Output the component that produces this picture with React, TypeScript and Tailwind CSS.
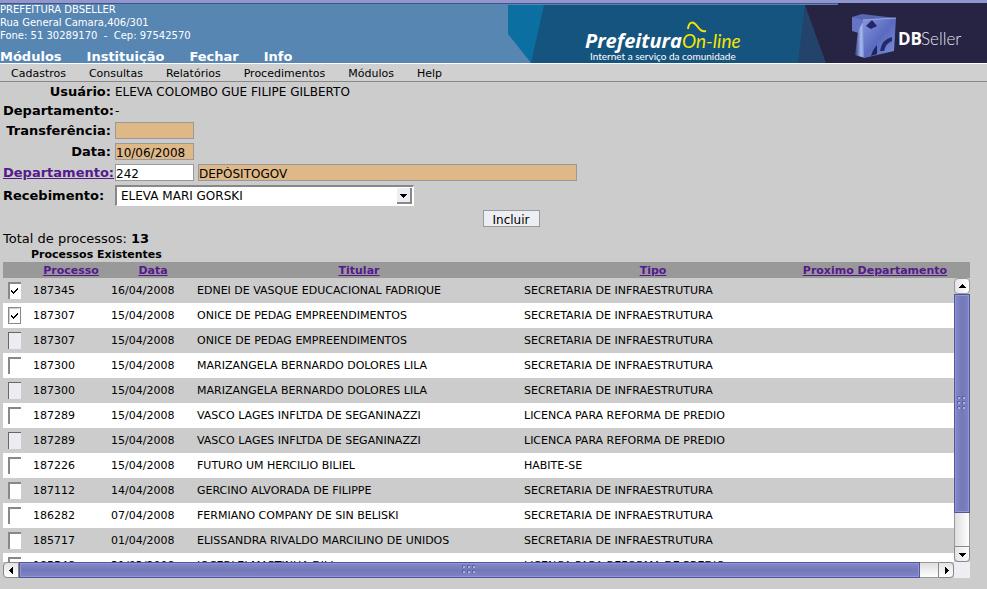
import React from "react";

type Processo = {
  numero: string;
  data: string;
  titular: string;
  tipo: string;
  estado: "marcado" | "focado" | "livre" | "bloqueado";
};

const processos: Processo[] = [
  { numero: "187345", data: "16/04/2008", titular: "EDNEI DE VASQUE EDUCACIONAL FADRIQUE", tipo: "SECRETARIA DE INFRAESTRUTURA", estado: "marcado" },
  { numero: "187307", data: "15/04/2008", titular: "ONICE DE PEDAG EMPREENDIMENTOS", tipo: "SECRETARIA DE INFRAESTRUTURA", estado: "focado" },
  { numero: "187307", data: "15/04/2008", titular: "ONICE DE PEDAG EMPREENDIMENTOS", tipo: "SECRETARIA DE INFRAESTRUTURA", estado: "bloqueado" },
  { numero: "187300", data: "15/04/2008", titular: "MARIZANGELA BERNARDO DOLORES LILA", tipo: "SECRETARIA DE INFRAESTRUTURA", estado: "livre" },
  { numero: "187300", data: "15/04/2008", titular: "MARIZANGELA BERNARDO DOLORES LILA", tipo: "SECRETARIA DE INFRAESTRUTURA", estado: "bloqueado" },
  { numero: "187289", data: "15/04/2008", titular: "VASCO LAGES INFLTDA DE SEGANINAZZI", tipo: "LICENCA PARA REFORMA DE PREDIO", estado: "livre" },
  { numero: "187289", data: "15/04/2008", titular: "VASCO LAGES INFLTDA DE SEGANINAZZI", tipo: "LICENCA PARA REFORMA DE PREDIO", estado: "bloqueado" },
  { numero: "187226", data: "15/04/2008", titular: "FUTURO UM HERCILIO BILIEL", tipo: "HABITE-SE", estado: "livre" },
  { numero: "187112", data: "14/04/2008", titular: "GERCINO ALVORADA DE FILIPPE", tipo: "SECRETARIA DE INFRAESTRUTURA", estado: "livre" },
  { numero: "186282", data: "07/04/2008", titular: "FERMIANO COMPANY DE SIN BELISKI", tipo: "SECRETARIA DE INFRAESTRUTURA", estado: "livre" },
  { numero: "185717", data: "01/04/2008", titular: "ELISSANDRA RIVALDO MARCILINO DE UNIDOS", tipo: "SECRETARIA DE INFRAESTRUTURA", estado: "livre" },
  { numero: "185548", data: "31/03/2008", titular: "JOCERLEI MARTINHA DILL", tipo: "LICENCA PARA REFORMA DE PREDIO", estado: "livre" },
];

const menuPrincipal = ["Módulos", "Instituição", "Fechar", "Info"];
const menuSecundario = ["Cadastros", "Consultas", "Relatórios", "Procedimentos", "Módulos", "Help"];

function Banner() {
  return (
    <svg viewBox="0 0 479 60" className="h-15 w-[479px] shrink-0 self-start" role="img" aria-label="Prefeitura On-line - DBSeller">
      <defs>
        <linearGradient id="lateral" x1="0" y1="0" x2="1" y2="0">
          <stop offset="0" stopColor="#2f3c86" />
          <stop offset="0.6" stopColor="#a9b9f0" />
          <stop offset="1" stopColor="#6f82cf" />
        </linearGradient>
        <linearGradient id="frente" x1="0" y1="0" x2="1" y2="1">
          <stop offset="0" stopColor="#8797dd" />
          <stop offset="0.5" stopColor="#5a6abf" />
          <stop offset="1" stopColor="#7d92e0" />
        </linearGradient>
      </defs>
      <path d="M0 2H479V60H23L0 31Z" fill="#0b70a1" />
      <path d="M36 2H479V60H23Z" fill="#15547e" />
      <path d="M297 2H330V60H290Z" fill="#23436b" />
      <path d="M297 2H330V0H479V60H318Z" fill="#262343" />
      <text x="77" y="45" fill="#fff" fontSize="20" fontWeight="700" fontStyle="italic" fontFamily="Open Sans, sans-serif">Prefeitura</text>
      <text x="174" y="45" fill="#f2e600" fontSize="19" fontStyle="italic" fontFamily="Lato, sans-serif">On-line</text>
      <text x="82" y="57" fill="#fff" fontSize="10" fontFamily="Lato, sans-serif">Internet a serviço da comunidade</text>
      <path d="M180 26C181 17 186 19 189 23S194 29 198 28" fill="none" stroke="#f2e600" strokeWidth="2" />
      <path d="M344 14L354 11L388 15L355 19Z" fill="#5a66b0" />
      <path d="M344 14L355 17L354 31L344 28Z" fill="#6674c4" />
      <path d="M350 28L356 17L357 55L347 52Z" fill="url(#lateral)" />
      <path d="M355 17L388 15L386 48L356 55Z" fill="url(#frente)" />
      <path d="M358 23L364 17L369 23L363 26Z" fill="#23266b" />
      <path d="M355 17L388 15" stroke="#9aa6e8" strokeWidth="1" />
      <path d="M384 34Q374 36 372 48L376 48Q378 40 384 38Z" fill="#262a6c" />
      <path d="M369 42Q365 46 363 53L369 51Z" fill="#20245c" />
      <text x="390" y="42" fill="#fff" fontSize="17" fontWeight="700" fontFamily="Open Sans, sans-serif">DB</text>
      <text x="413" y="42" fill="#e4e4f0" fontSize="17" fontWeight="300" fontFamily="Lato, sans-serif">Seller</text>
    </svg>
  );
}

function Seta({ direcao }: { direcao: "cima" | "baixo" | "esquerda" | "direita" }) {
  const formas = {
    cima: "M0 5H7V4H6V3H5V2H4V1H3V2H2V3H1V4H0Z",
    baixo: "M0 2H7V3H6V4H5V5H4V6H3V5H2V4H1V3H0Z",
    esquerda: "M5 0V7H4V6H3V5H2V4H1V3H2V2H3V1H4V0Z",
    direita: "M2 0V7H3V6H4V5H5V4H6V3H5V2H4V1H3V0Z",
  };
  return (
    <svg viewBox="0 0 7 7" className="size-[7px]" shapeRendering="crispEdges" aria-hidden="true">
      <path d={formas[direcao]} fill="#000" />
    </svg>
  );
}

function Ranhuras({ colunas, linhas }: { colunas: number; linhas: number }) {
  const pontos = Array.from({ length: colunas * linhas }, (_, i) => [(i % colunas) * 5, Math.floor(i / colunas) * 5]);
  return (
    <svg width={colunas * 5} height={linhas * 5} shapeRendering="crispEdges" aria-hidden="true">
      {pontos.map(([x, y]) => (
        <g key={`${x}-${y}`}>
          <path d={`M${x} ${y}h3v1h-2v2h-1z`} fill="#5d61a0" />
          <path d={`M${x + 1} ${y + 1}h2v2h-2z`} fill="#a9aeea" />
        </g>
      ))}
    </svg>
  );
}

function BarraVertical() {
  return (
    <div className="flex w-4 shrink-0 flex-col">
      <button aria-label="Rolar para cima" className="flex h-4 items-center justify-center rounded-sm border border-[#999] bg-linear-to-r from-[#e4e4e4] to-white">
        <Seta direcao="cima" />
      </button>
      <div className="flex flex-1 flex-col border-x border-[#999] bg-linear-to-r from-[#dedede] to-white">
        <div className="-mx-px flex h-[219px] items-center justify-center border border-[#54578c] bg-linear-to-r from-[#8388cc] via-[#7478b6] to-[#7f84c8] shadow-[inset_0_0_0_1px_#8f94e0]">
          <Ranhuras colunas={2} linhas={3} />
        </div>
      </div>
      <button aria-label="Rolar para baixo" className="flex h-4 items-center justify-center rounded-b-sm border border-[#888] bg-linear-to-r from-[#e4e4e4] to-white">
        <Seta direcao="baixo" />
      </button>
    </div>
  );
}

function BarraHorizontal() {
  return (
    <div className="flex h-4">
      <div className="flex flex-1">
        <button aria-label="Rolar para a esquerda" className="flex w-4 items-center justify-center rounded-l-sm border border-[#888] bg-linear-to-b from-[#e4e4e4] to-white">
          <Seta direcao="esquerda" />
        </button>
        <div className="flex flex-1 border-y border-[#999] bg-linear-to-b from-[#dedede] to-white">
          <div className="-my-px flex w-[98%] items-center justify-center border border-[#54578c] bg-linear-to-b from-[#8388cc] via-[#7478b6] to-[#7f84c8] shadow-[inset_0_0_0_1px_#8f94e0]">
            <Ranhuras colunas={3} linhas={2} />
          </div>
        </div>
        <button aria-label="Rolar para a direita" className="flex w-4 items-center justify-center rounded-r-sm border border-[#888] bg-linear-to-b from-[#e4e4e4] to-white">
          <Seta direcao="direita" />
        </button>
      </div>
      <div className="w-4 bg-[#edeef3]" />
    </div>
  );
}

const estiloCaixa = {
  marcado: "border-t-2 border-l-2 border-[#888] bg-white",
  focado: "border border-[#888] bg-white shadow-[inset_-1px_-1px_0_#fff,inset_1px_1px_0_#ccc]",
  livre: "border-t-2 border-l-2 border-[#888] bg-white",
  bloqueado: "border-t border-l border-[#666] bg-[#ebedf2]",
};

function Caixa({ processo }: { processo: Processo }) {
  return (
    <span className="grid h-[17px] w-[13px]">
      <input
        type="checkbox"
        aria-label={`Processo ${processo.numero}`}
        defaultChecked={processo.estado === "marcado" || processo.estado === "focado"}
        disabled={processo.estado === "bloqueado"}
        className={`peer col-start-1 row-start-1 h-[17px] w-[13px] appearance-none ${estiloCaixa[processo.estado]}`}
      />
      <svg viewBox="0 0 7 6" className="pointer-events-none invisible col-start-1 row-start-1 h-[6px] w-[7px] place-self-center peer-checked:visible" shapeRendering="crispEdges" aria-hidden="true">
        <path d="M0 2h1v1h1v1h1v-1h1v-1h1v-1h1v-1h1v2h-1v1h-1v1h-1v1h-1v1h-1v-1h-1v-1h-1z" fill="#000" />
      </svg>
    </span>
  );
}

const rotulo = "text-right text-[13px] font-bold whitespace-nowrap";
const campo = "h-[17px] border border-[#999] px-0 pt-0.5 text-xs leading-4 outline-none";
const titulo = "p-0 pt-px leading-[15px]";
const celula = "p-0 pt-0.5";

export default function App() {
  return (
    <div className="min-h-screen bg-[#ccc] font-['DejaVu_Sans',sans-serif] text-black">
      <header className="flex justify-between border-t-3 border-[#8f97cf] bg-[#5786b3] text-white shadow-[inset_0_1px_0_#4b4f85]">
        <div className="flex flex-col justify-between">
          <p className="text-[10px] leading-[13px]">
            PREFEITURA DBSELLER
            <br />
            Rua General Camara,406/301
            <br />
            Fone: 51 30289170 &nbsp;- &nbsp;Cep: 97542570
          </p>
          <nav className="flex gap-[25px] text-[13px] leading-3 font-bold">
            {menuPrincipal.map((item) => (
              <a key={item} href="#">{item}</a>
            ))}
          </nav>
        </div>
        <Banner />
      </header>

      <nav className="flex h-[19px] items-center gap-[23px] border-t border-b border-t-white border-b-[#888] bg-[#d0d0d0] pt-0.5 pl-[11px] text-[11px] leading-[15px]">
        {menuSecundario.map((item) => (
          <a key={item} href="#">{item}</a>
        ))}
      </nav>

      <main className="pr-[17px] pl-[3px]">
        <form onSubmit={(e) => e.preventDefault()}>
          <div className="grid grid-cols-[108px_1fr] items-center gap-x-1">
            <span className={`${rotulo} leading-[19px]`}>Usuário:</span>
            <span className="text-xs">ELEVA COLOMBO GUE FILIPE GILBERTO</span>

            <span className={`${rotulo} leading-[19px]`}>Departamento:</span>
            <span className="text-xs">-</span>

            <label htmlFor="transferencia" className={`${rotulo} leading-[21px]`}>Transferência:</label>
            <input id="transferencia" className={`${campo} w-[79px] bg-[#deb887]`} />

            <label htmlFor="data" className={`${rotulo} leading-[21px]`}>Data:</label>
            <input id="data" defaultValue="10/06/2008" className={`${campo} w-[79px] bg-[#deb887]`} />

            <label htmlFor="departamento" className={`${rotulo} leading-[21px]`}>
              <a href="#" className="text-[#551a8b] underline">Departamento:</a>
            </label>
            <div className="flex gap-1">
              <input id="departamento" defaultValue="242" className={`${campo} w-[79px] bg-white`} />
              <input aria-label="Nome do departamento" defaultValue="DEPÓSITOGOV" className={`${campo} w-[379px] bg-[#deb887]`} />
            </div>

            <label htmlFor="recebimento" className="text-[13px] leading-[25px] font-bold">Recebimento:</label>
            <div className="grid w-[299px] border-t-2 border-r border-b border-l-2 border-[#888] border-r-white border-b-white">
              <select id="recebimento" className="col-start-1 row-start-1 h-[18px] appearance-none bg-white pl-1 text-xs outline-none">
                <option>ELEVA MARI GORSKI</option>
              </select>
              <span className="pointer-events-none col-start-1 row-start-1 mr-px flex h-4 w-[15px] items-center justify-center self-center justify-self-end border-r-2 border-b-2 border-[#888] bg-[#edeef3]">
                <Seta direcao="baixo" />
              </span>
            </div>
          </div>
          <div className="flex justify-center pt-[2px] pl-[49px]">
            <button className="h-[17px] w-[57px] border border-[#999] bg-[#edeef3] pt-0.5 text-xs leading-[14px]">Incluir</button>
          </div>
        </form>

        <p className="mt-1 text-[13px] leading-4">
          Total de processos: <b>13</b>
        </p>
        <h2 className="pl-7 text-[11px] leading-[15px] font-bold">Processos Existentes</h2>

        <table className="w-full table-fixed bg-[#999] text-[11px] text-[#551a8b]" aria-label="Processos Existentes">
          <colgroup>
            <col className="w-[25px]" />
            <col className="w-[86px]" />
            <col className="w-[78px]" />
            <col className="w-[334px]" />
            <col className="w-[254px]" />
            <col />
          </colgroup>
          <thead>
            <tr>
              <th className={titulo} aria-label="Selecionar" />
              <th className={titulo}><a href="#" className="underline">Processo</a></th>
              <th className={titulo}><a href="#" className="underline">Data</a></th>
              <th className={titulo}><a href="#" className="underline">Titular</a></th>
              <th className={titulo}><a href="#" className="underline">Tipo</a></th>
              <th className={titulo}><a href="#" className="underline">Proximo Departamento</a></th>
            </tr>
          </thead>
        </table>
        <div className="flex h-[284px]">
          <div className="min-w-0 flex-1 overflow-hidden">
            <table className="w-full table-fixed text-[11px]" aria-label="Lista de processos">
              <colgroup>
                <col className="w-[30px]" />
                <col className="w-[78px]" />
                <col className="w-[86px]" />
                <col className="w-[327px]" />
                <col />
              </colgroup>
              <tbody>
                {processos.map((p, i) => (
                  <tr key={i} className="h-[25px] even:bg-white">
                    <td className="p-0 pl-[5px]"><Caixa processo={p} /></td>
                    <td className={celula}>{p.numero}</td>
                    <td className={celula}>{p.data}</td>
                    <td className={celula}>{p.titular}</td>
                    <td className={celula}>{p.tipo}</td>
                  </tr>
                ))}
              </tbody>
            </table>
          </div>
          <BarraVertical />
        </div>
        <BarraHorizontal />
      </main>
    </div>
  );
}
